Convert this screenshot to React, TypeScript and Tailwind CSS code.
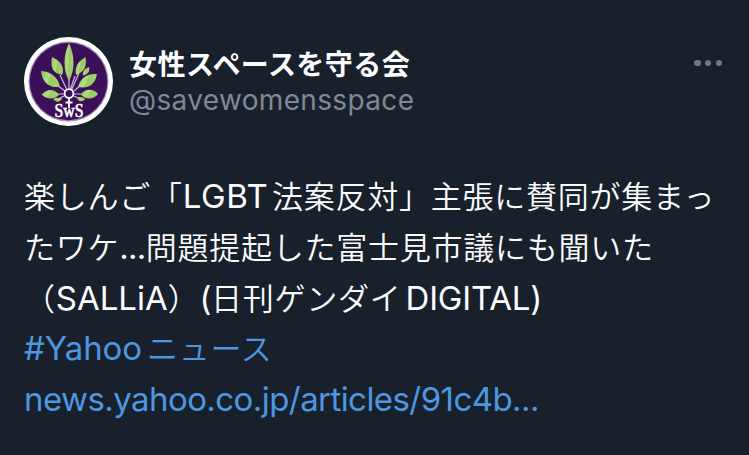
import React from "react";

const jp = "font-['Noto_Sans_CJK_JP_DemiLight','Noto_Sans_CJK_JP',sans-serif] font-[350] text-[31px] tracking-[0.75px]";
const latin = "font-['Inter',sans-serif] font-normal text-[33px]";

function Avatar() {
  return (
    <svg viewBox="0 0 90 90" className="h-[90px] w-[90px] shrink-0" aria-label="SWS">
      <defs>
        <linearGradient id="leaf" x1="0" x2="1" y1="0" y2="0.3">
          <stop offset="0" stopColor="#92c65c" />
          <stop offset="0.45" stopColor="#b4dc84" />
          <stop offset="0.6" stopColor="#98cb60" />
          <stop offset="1" stopColor="#a3d26e" />
        </linearGradient>
      </defs>
      <circle cx="44.500" cy="45.500" r="44.500" fill="#fff" />
      <circle cx="44.500" cy="45.500" r="40" fill="#a18db0" />
      <circle cx="44.500" cy="45.500" r="38.800" fill="#3c0f5a" />
      <g stroke="#cdbbe0" strokeWidth="1.2" fill="none">
        <path d="M45 54V42M43 54L36 39M41 55L30 47M40 58L33 58M47.500 54L55 37M46.500 53L51 40M50 55L57 49M50 58L58 58M40 60L36 62M50 60L54 62" />
      </g>
      <g fill="url(#leaf)">
        <path d="M45 7C39 20 39 34 45 45C51 34 51 20 45 7Z" />
        <path d="M28 21C26 32 29 37 38 39C41 32 37 25 28 21Z" />
        <path d="M17 35C18.500 47 25 52 36 51C34 41 27 35.500 17 35Z" />
        <path d="M17.500 58.500C24 52 31 53 35 59C29 64 23 63.500 17.500 58.500Z" />
        <path d="M61.500 21C53 26 50.500 32 52 39C60 36 63 31 61.500 21Z" />
        <path d="M65 31C60 33 58.500 35.500 59 39.500C64 38 66 36 65 31Z" />
        <path d="M73 38C62 37 56 43 54 51C64 53 71 49 73 38Z" />
        <path d="M74 58C69 51.500 60 53 57 58.500C61 64 69 64 74 58Z" />
        <path d="M29 63C32 61 36 61.500 38 62.500C35 67 32 66 29 63ZM53 61.500C55 60.500 60 61 61 63.500C58 66 54 66 53 61.500Z" />
      </g>
      <g stroke="#fff" strokeWidth="1.800" fill="none">
        <circle cx="45" cy="57.500" r="4.400" fill="#3c0f5a" />
        <path d="M45 62V72M41.500 66.500H48.500" />
      </g>
      <text x="45" y="81" textAnchor="middle" fill="#fff" stroke="#fff" strokeWidth=".6" className="font-['Liberation_Serif',serif] text-[18px]" textLength="29" lengthAdjust="spacingAndGlyphs">SwS</text>
    </svg>
  );
}

export default function App() {
  return (
    <article className="h-[455px] w-full overflow-hidden bg-[#18202b] pl-6 pr-[27px] pt-9 text-[#fbfcfe]">
      <header className="flex h-[90px] items-start">
        <Avatar />
        <div className="ml-[15px] flex flex-col whitespace-nowrap pt-[9px]">
          <h1 className="font-['Noto_Sans_CJK_JP',sans-serif] text-[28px] font-bold leading-[36px] tracking-[0.45px]">女性スペースを守る会</h1>
          <p className="pt-px font-['Inter',sans-serif] text-[28px] leading-[36px] tracking-[0.35px] text-[#7f8896]">@savewomensspace</p>
        </div>
        <div className="ml-auto flex gap-[4.2px] pt-[23.5px]">
          <i className="h-[6.5px] w-[6.5px] rounded-full bg-[#6f7986]" />
          <i className="h-[6.5px] w-[6.5px] rounded-full bg-[#6f7986]" />
          <i className="h-[6.5px] w-[6.5px] rounded-full bg-[#6f7986]" />
        </div>
      </header>
      <div className="mt-[44.4px] whitespace-nowrap leading-[50.4px]">
        <div className="flex h-[50.4px] items-baseline">
          <span className={jp}>楽しんご「</span>
          <span className={`${latin} tracking-[0.6px]`}>LGBT</span>
          <span className={`${jp} ml-[3.5px]`}>法案反対」主張に賛同が集まっ</span>
        </div>
        <div className="flex h-[50.4px] items-baseline">
          <span className={jp}>たワケ</span>
          <span className={`${latin} tracking-[-0.7px]`}>...</span>
          <span className={jp}>問題提起した富士見市議にも聞いた</span>
        </div>
        <div className="flex h-[50.4px] items-baseline pt-px">
          <span className={jp}>（</span>
          <span className={latin}>SALLiA</span>
          <span className={jp}>）</span>
          <span className={`${latin} tracking-[-0.5px]`}>(</span>
          <span className={jp}>日刊ゲンダイ</span>
          <span className={`${latin} ml-1 tracking-[-0.2px]`}>DIGITAL)</span>
        </div>
        <a className="flex h-[50.4px] items-baseline text-[#4c97e0]">
          <span className={`${latin} tracking-[-0.1px]`}>#Yahoo</span>
          <span className={`${jp} ml-[5px]`}>ニュース</span>
        </a>
        <a className="flex h-[50.4px] items-baseline pt-[2px] text-[#4c97e0]">
          <span className={`${latin} tracking-[-0.57px]`}>news.yahoo.co.jp/articles/91c4b...</span>
        </a>
      </div>
    </article>
  );
}
